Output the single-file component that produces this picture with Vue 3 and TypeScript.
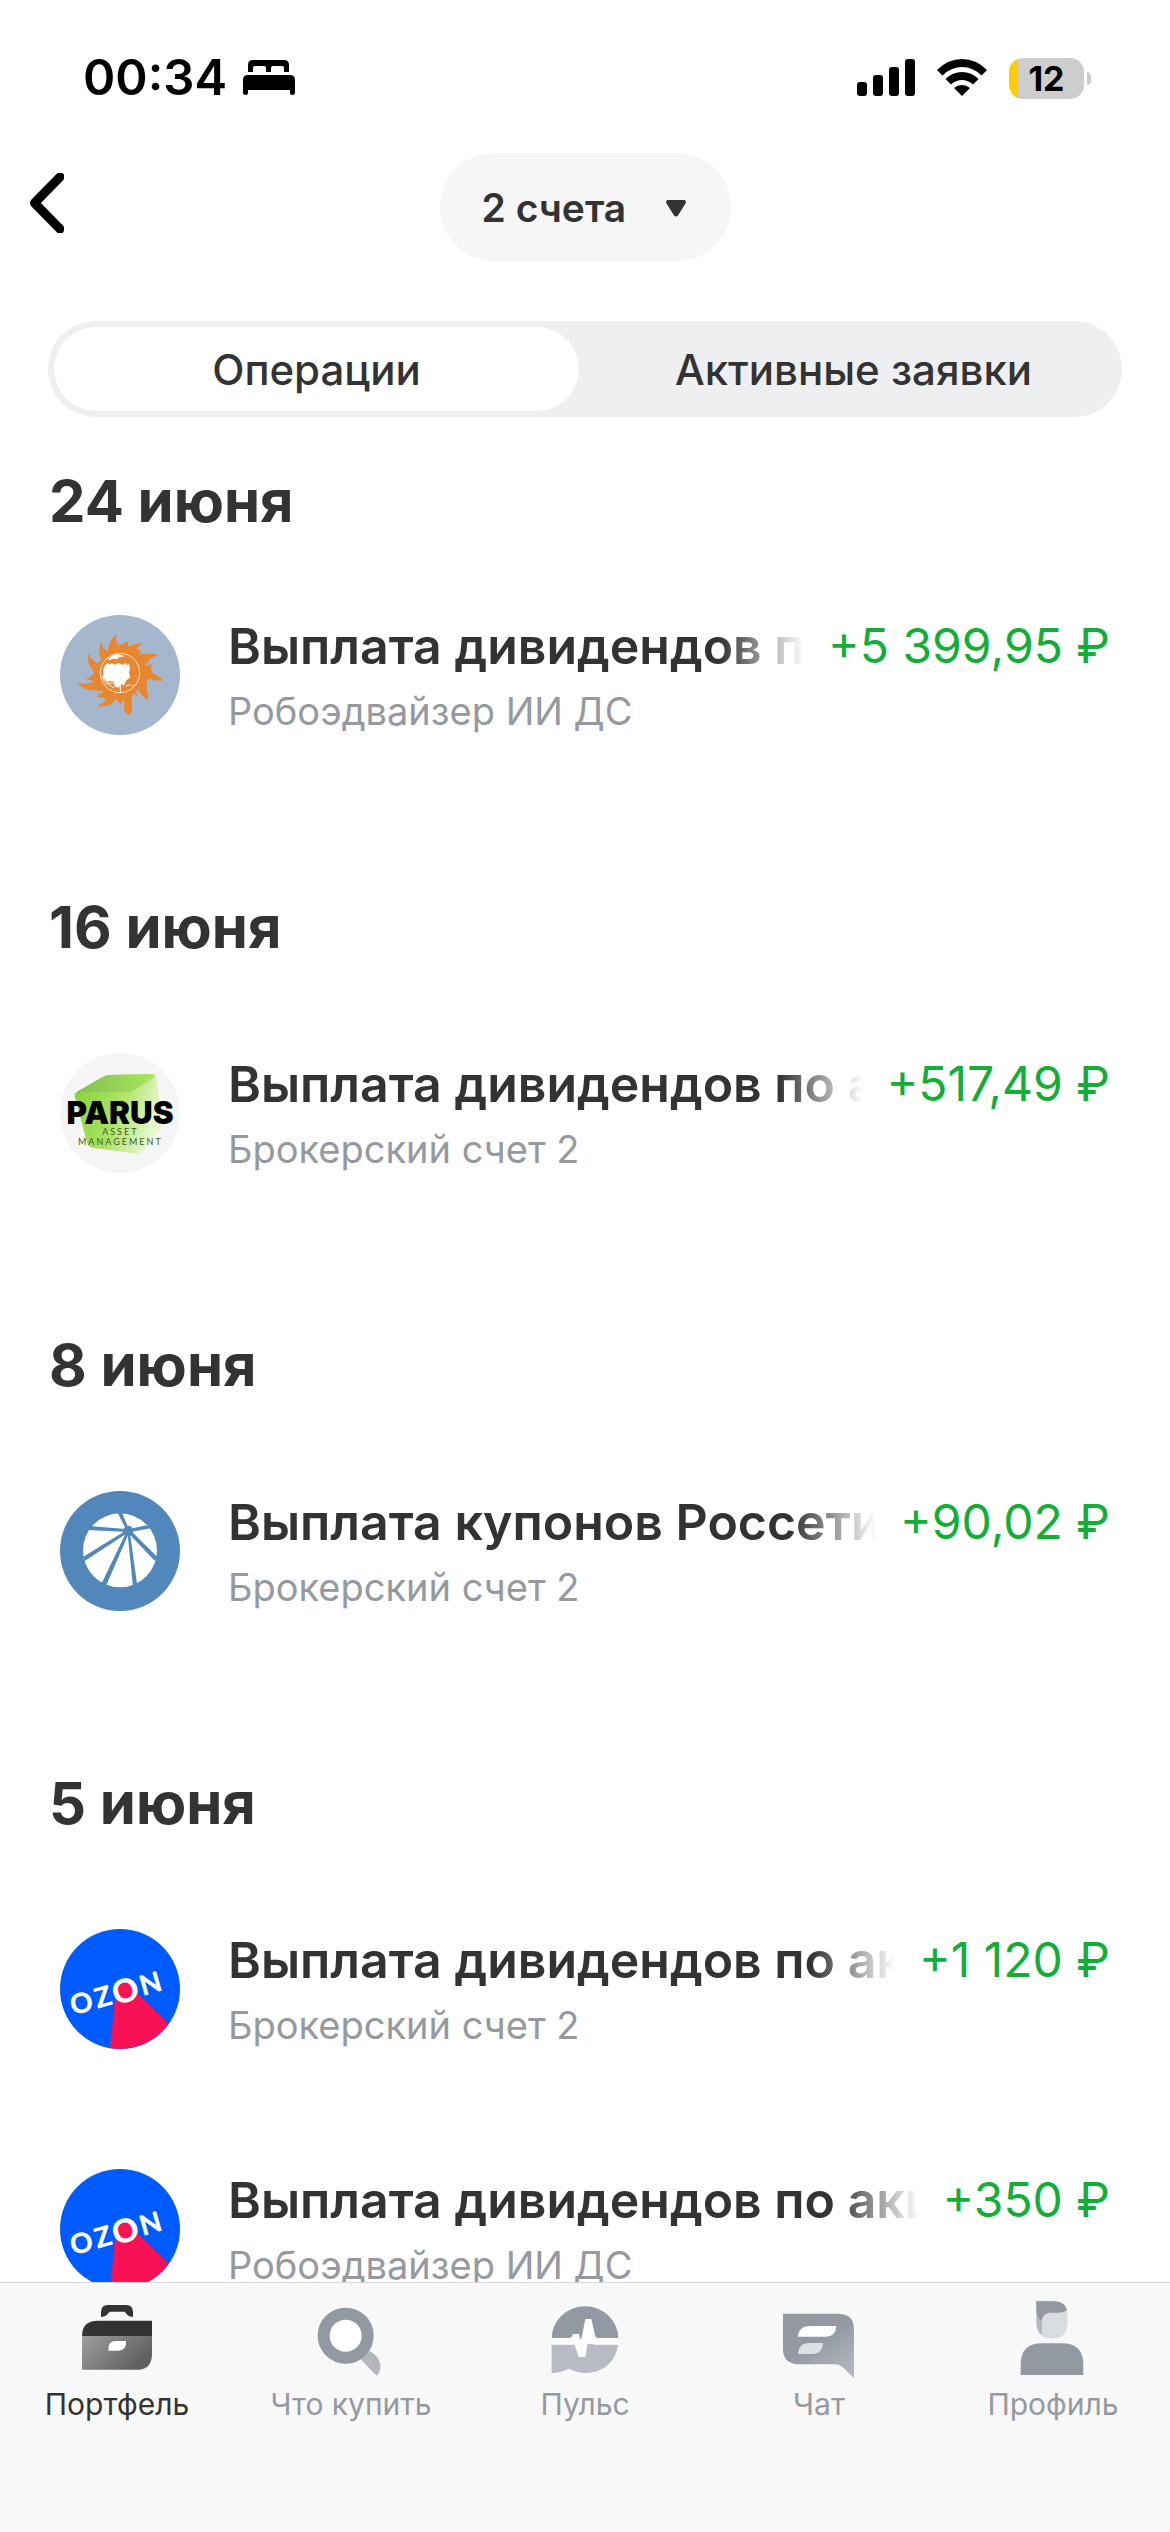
<script setup lang="ts">
import { ref } from 'vue'

type Logo = 'sun' | 'parus' | 'umbrella' | 'ozon'

interface Operation {
  id: number
  logo: Logo
  title: string
  account: string
  amount: string
}

interface Day {
  date: string
  operations: Operation[]
}

const segments = ['Операции', 'Активные заявки']
const activeSegment = ref(0)
const account = ref('2 счета')

const days: Day[] = [
  {
    date: '24 июня',
    operations: [
      { id: 1, logo: 'sun', title: 'Выплата дивидендов по акциям', account: 'Робоэдвайзер ИИ ДС', amount: '+5\u00a0399,95\u00a0₽' },
    ],
  },
  {
    date: '16 июня',
    operations: [
      { id: 2, logo: 'parus', title: 'Выплата дивидендов по акциям', account: 'Брокерский счет 2', amount: '+517,49\u00a0₽' },
    ],
  },
  {
    date: '8 июня',
    operations: [
      { id: 3, logo: 'umbrella', title: 'Выплата купонов Россети', account: 'Брокерский счет 2', amount: '+90,02\u00a0₽' },
    ],
  },
  {
    date: '5 июня',
    operations: [
      { id: 4, logo: 'ozon', title: 'Выплата дивидендов по акциям', account: 'Брокерский счет 2', amount: '+1\u00a0120\u00a0₽' },
      { id: 5, logo: 'ozon', title: 'Выплата дивидендов по акциям', account: 'Робоэдвайзер ИИ ДС', amount: '+350\u00a0₽' },
    ],
  },
]
</script>

<template>
  <div class="screen">
    <div class="status">
      <div class="status-side">
        <span class="clock">00:34</span>
        <svg class="bed" viewBox="0 0 52 36" aria-hidden="true">
          <path d="M5 12V5q0-5 5-5h31q5 0 5 5v7h-5V8q0-2-2-2h-9q-2 0-2 2v4h-5V8q0-2-2-2h-9q-2 0-2 2v4z" />
          <path d="M0 33V20q0-5 5-5h42q5 0 5 5v13q0 2-2.500 2t-2.500-2v-3H5v3q0 2-2.500 2T0 33z" />
        </svg>
      </div>
      <div class="status-side right">
        <svg class="signal" viewBox="0 0 58 38" aria-hidden="true">
          <rect x="0" y="23" width="10" height="14" rx="3" />
          <rect x="16" y="16" width="10" height="21" rx="3" />
          <rect x="32" y="8" width="10" height="29" rx="3" />
          <rect x="48" y="0" width="10" height="37" rx="3" />
        </svg>
        <svg class="wifi" viewBox="0 0 50 38" aria-hidden="true">
          <path d="M0 11Q11 0 25 0t25 11l-5.500 5.500Q36 8 25 8T5.500 16.500z" />
          <path d="M8.500 20Q15.500 13 25 13t16.500 7L36 25.500Q31 21 25 21t-11 4.500z" />
          <path d="M17 29q3.500-3 8-3t8 3l-8 8z" />
        </svg>
        <span class="battery"><span class="level">12</span></span>
      </div>
    </div>

    <header class="header">
      <button class="back" type="button" aria-label="Назад">
        <svg viewBox="0 0 34 60" aria-hidden="true">
          <path d="M30 4 4.500 30 30 56" />
        </svg>
      </button>
      <label class="account">
        <select v-model="account" aria-label="Счета">
          <option>2 счета</option>
        </select>
        <svg viewBox="0 0 20 17" aria-hidden="true">
          <path d="M2 0h16q3 .5 1.500 3.500L12 15.500q-2 2-4 0L.5 3.500Q-1 .5 2 0z" />
        </svg>
      </label>
    </header>

    <div class="segments" role="tablist">
      <button
        v-for="(name, index) in segments"
        :key="name"
        type="button"
        role="tab"
        class="segment"
        :class="{ active: index === activeSegment }"
        :aria-selected="index === activeSegment"
        @click="activeSegment = index"
      >
        {{ name }}
      </button>
    </div>

    <main class="feed">
      <section v-for="day in days" :key="day.date" class="day">
        <h2>{{ day.date }}</h2>
        <article v-for="item in day.operations" :key="item.id" class="operation">
          <svg v-if="item.logo === 'sun'" class="logo" viewBox="60 75 360 360" aria-hidden="true">
            <circle cx="240" cy="255" r="180" fill="#a5b7cd" />
            <path
              fill="#e98630"
              d="M203 187Q205 152 229 132Q226 151 235 166Q248 163 267 152Q261 163 266 169Q284 159 307 160Q291 170 292 182L303 181L298 193Q326 188 357 194Q329 202 325 216Q317 220 316 227L336 222Q328 239 341 252Q358 257 368 272Q344 273 325 266Q319 278 320 300Q325 315 326 330Q309 325 301 308Q293 296 287 300L293 318L280 311Q272 322 276 343Q280 362 268 375Q251 368 252 350Q257 329 247 333L241 346Q238 330 226 326Q218 342 203 347Q187 346 174 353Q173 344 190 338Q206 322 185 324L168 319Q186 311 191 302Q162 302 143 299Q123 294 113 279Q130 284 150 279Q172 274 150 269L136 266Q158 259 163 248Q147 228 144 211Q142 198 148 189Q151 206 164 215Q177 225 184 211Q172 184 183 155Q187 173 203 187z"
            />
            <circle cx="240" cy="249" r="59" fill="none" stroke="#fbe9d2" stroke-width="3" />
            <path
              fill="#fff"
              d="M190 237q3-13 13-19l5 5 8-3 9 5 9-7 13 7 10-7 3 7 7-3 3 14-3 10 3 17-11 8-7 16-7-5-10 11-9-4-5-14-11-3-9 5-11-13zM204 207q12-12 25-14l15 1 11 5-15 2-10 7-13-2-9 5z"
            />
            <path d="M187 257q9 9 18 21l-5 5q-11-11-13-26zM202 281l15-3 12 8-8 7zM258 289l8-5 6 3 8-2M241 282v24" fill="none" stroke="#fff3e5" stroke-width="3" />
          </svg>
          <svg v-else-if="item.logo === 'parus'" class="logo" viewBox="60 68 360 360" role="img" aria-label="Parus">
            <defs>
              <linearGradient id="parus-front" x1="0" y1="0" x2="1" y2="0.300">
                <stop offset="0" stop-color="#86cf3d" />
                <stop offset="0.550" stop-color="#aae360" />
                <stop offset="1" stop-color="#e6f7cf" />
              </linearGradient>
              <linearGradient id="parus-top" x1="0" y1="0" x2="1" y2="0">
                <stop offset="0" stop-color="#82bd52" />
                <stop offset="1" stop-color="#a9e75a" />
              </linearGradient>
            </defs>
            <circle cx="240" cy="248" r="180" fill="#f5f5f5" />
            <path fill="url(#parus-front)" d="M104 198q0-9 9-13l70-42q12-9 28-9l120-3q15 0 17 13l20 120q4 19-8 34l-50 65q-7 9-20 7l-131-18q-16-2-18-17z" />
            <path fill="url(#parus-top)" d="M104 193q2-6 9-10l70-40q12-9 28-9l120-3q12 0 15 7l-72 47-161 1q-12 0-9 7z" />
            <text class="parus-name" x="240" y="281" text-anchor="middle">PARUS</text>
            <text class="parus-note" x="241" y="315" text-anchor="middle">ASSET</text>
            <text class="parus-note" x="241" y="344" text-anchor="middle">MANAGEMENT</text>
          </svg>
          <svg v-else-if="item.logo === 'umbrella'" class="logo" viewBox="60 63 360 360" aria-hidden="true">
            <circle cx="240" cy="243" r="180" fill="#5187bb" />
            <circle cx="240" cy="241" r="111" fill="#fff" />
            <g fill="#5187bb">
              <circle cx="265" cy="182" r="15" />
              <path d="M261 184 233 128l13 0L268 180z" />
              <path d="M265 178 147 168l-2 12L264 186z" />
              <path d="M264 178 130 260l5 12L267 186z" />
              <path d="M261 182 185 340l14 6L269 184z" />
              <path d="M262 182 279 350l13-2L269 182z" />
              <path d="M268 178 353 262l-9 10L262 186z" />
              <path d="M265 178 320 166l13 9L265 187z" />
            </g>
          </svg>
          <svg v-else class="logo" viewBox="60 87 360 360" role="img" aria-label="Ozon">
            <circle cx="240" cy="267" r="180" fill="#005bff" />
            <path fill="#f91155" d="M226 290 210 444.500A180 180 0 0 0 386 371L292 280z" />
            <ellipse cx="256" cy="272" rx="31" ry="24" fill="#f91155" transform="rotate(-16 256 272)" />
            <g class="ozon-name" text-anchor="middle">
              <text transform="rotate(-15 124 309)" x="124" y="339">O</text>
              <text transform="rotate(-16 187 291)" x="189" y="321">Z</text>
              <text class="ozon-wide" transform="rotate(-16 256 272)" x="256" y="307">O</text>
              <text transform="rotate(-16 333 250)" x="331" y="280">N</text>
            </g>
          </svg>

          <div class="details">
            <div class="line">
              <h3>{{ item.title }}</h3>
              <span class="amount">{{ item.amount }}</span>
            </div>
            <p>{{ item.account }}</p>
          </div>
        </article>
      </section>
    </main>

    <nav class="tabs">
      <a href="#portfolio" class="tab current" aria-current="page">
        <svg viewBox="243 120 216 240" aria-hidden="true">
          <defs>
            <linearGradient id="case" x1="0" y1="0" x2="1" y2="0.500">
              <stop offset="0" stop-color="#9f9f9f" />
              <stop offset="1" stop-color="#5f5f5f" />
            </linearGradient>
          </defs>
          <path fill="#333" d="M303 171v-14q0-22 20-22h56q20 0 20 22v14q-14-1-20-10l-5-6h-45l-6 7q-6 8-20 9z" />
          <path fill="#333" d="M246 228q0-46 48-46h162v46z" />
          <path fill="url(#case)" d="M246 228h210v57q-2 44-42 44H246z" />
          <path fill="#fff" d="M325 272q-3-29 24-29h29q3 29-24 29z" />
        </svg>
        <span>Портфель</span>
      </a>
      <a href="#buy" class="tab">
        <svg viewBox="945 120 216 240" aria-hidden="true">
          <path fill="#b3b7bd" d="M1082 298l28-26 18 15q21 24 9 52l-7 8z" />
          <circle cx="1037" cy="227" r="66" fill="#fff" stroke="#9299a2" stroke-width="36" />
        </svg>
        <span>Что купить</span>
      </a>
      <a href="#pulse" class="tab">
        <svg viewBox="447 120 216 240" aria-hidden="true">
          <path fill="#9299a2" d="M455 236a100 97 0 0 1 200 0z" />
          <path fill="#b9bcc5" d="M455 252h200q-6 45-38 68-50 34-112 6-20 12-50 13z" />
          <path fill="#fff" d="M455 234h52q7 0 9-6l3-6h18l5 24 14-69h18l11 48q2 9 9 9h61v20h-72q-14-3-18-18l-9 55h-20l-12-37h-69z" />
        </svg>
        <span>Пульс</span>
      </a>
      <a href="#chat" class="tab">
        <svg viewBox="39 120 216 240" aria-hidden="true">
          <defs>
            <linearGradient id="bubble" x1="0" y1="0" x2="0.700" y2="1">
              <stop offset="0.500" stop-color="#9299a2" />
              <stop offset="1" stop-color="#b0b4bc" />
            </linearGradient>
          </defs>
          <path fill="url(#bubble)" d="M39 161h168q45 2 45 45v148l-29-28q-13-13-30-13H85q-46-2-46-46z" />
          <path fill="#fff" d="M84 230q2-32 36-32h79q-2 32-31 32z" />
          <path fill="#dce0e4" d="M84 282q2-33 34-33h41q-2 33-33 33z" />
        </svg>
        <span>Чат</span>
      </a>
      <a href="#profile" class="tab">
        <svg viewBox="741 120 216 240" aria-hidden="true">
          <path fill="#dadde0" d="M799 124h57q37 5 37 36v30q-2 46-47 46t-47-46z" />
          <path fill="#b5bac1" d="M799 124h60v30l-26 6q-17 5-17 22v42q-17-12-17-36z" />
          <path fill="#9299a2" d="M799 124h57q28 2 35 25-8 9-26 9h-25q-24 1-24 26-17-8-17-40z" />
          <path fill="#9299a2" d="M752 345v-37q4-58 63-58h62q59 0 63 58v37z" />
        </svg>
        <span>Профиль</span>
      </a>
    </nav>
  </div>
</template>

<style>
body {
  margin: 0;
  background: #fff;
}
</style>

<style scoped>
.screen {
  display: flex;
  flex-direction: column;
  height: 100vh;
  overflow: hidden;
  font-family: Inter, "Noto Sans", sans-serif;
  color: #333;
  background: #fff;
}

button,
select {
  margin: 0;
  border: 0;
  font-family: inherit;
  color: inherit;
  cursor: pointer;
}

.status {
  display: flex;
  flex: none;
  align-items: center;
  justify-content: space-between;
  height: 153px;
  padding: 3px 79px 0 83px;
  box-sizing: border-box;
  color: #000;
}

.status-side {
  display: flex;
  align-items: center;
  gap: 16px;
}

.status-side.right {
  gap: 22px;
}

.clock {
  font-size: 49px;
  line-height: 60px;
  font-weight: 600;
}

.bed {
  width: 52px;
  height: 36px;
}

.signal {
  width: 58px;
  height: 38px;
}

.wifi {
  width: 50px;
  height: 38px;
}

.battery {
  display: flex;
  align-items: center;
  gap: 3px;
}

.battery::after {
  content: "";
  width: 4px;
  height: 13px;
  border-radius: 0 6px 6px 0;
  background: #cdcdcd;
}

.level {
  width: 75px;
  height: 41px;
  border-radius: 14px;
  background: linear-gradient(90deg, #ffcc00 9px, #cdcdcd 9px);
  font-size: 34px;
  line-height: 41px;
  font-weight: 700;
  text-align: center;
}

.header {
  display: grid;
  flex: none;
  grid-template-columns: 1fr auto 1fr;
  align-items: center;
  height: 108px;
}

.back {
  display: flex;
  justify-self: start;
  padding: 0 30px 8px;
  background: none;
}

.back svg {
  width: 34px;
  height: 60px;
  fill: none;
  stroke: #000;
  stroke-width: 9px;
  stroke-linecap: round;
  stroke-linejoin: round;
}

.account {
  position: relative;
  display: block;
}

.account select {
  display: block;
  height: 108px;
  padding: 0 104px 0 42px;
  border-radius: 54px;
  appearance: none;
  background: #f6f6f6;
  font-size: 39px;
  font-weight: 600;
}

.account svg {
  position: absolute;
  top: 47px;
  right: 45px;
  width: 20px;
  height: 17px;
  fill: #333;
  pointer-events: none;
}

.segments {
  display: grid;
  flex: none;
  grid-template-columns: 1fr 1fr;
  gap: 12px;
  margin: 60px 48px 0;
  padding: 6px;
  border-radius: 48px;
  background: #edeff1;
}

.segment {
  height: 84px;
  padding: 0;
  border-radius: 42px;
  background: none;
  font-size: 42px;
  font-weight: 500;
}

.segment.active {
  background: #fff;
}

.feed {
  flex: 1;
  min-height: 0;
  overflow: hidden;
}

.day h2 {
  margin: 0;
  padding: 96px 49px 30px;
  font-size: 58px;
  line-height: 72px;
  font-weight: 700;
}

.day:first-child h2 {
  padding: 48px 49px 18px;
}

.operation {
  display: flex;
  align-items: center;
  gap: 48px;
  height: 240px;
  padding: 0 60px;
}

.logo {
  flex: none;
  width: 120px;
  height: 120px;
}

.parus-name {
  font-size: 94px;
  font-weight: 900;
  fill: #000;
}

.parus-note {
  font-family: Lato, sans-serif;
  font-size: 27px;
  letter-spacing: 6px;
  fill: #3d5a2a;
}

.ozon-name {
  font-family: Lato, sans-serif;
  font-size: 84px;
  font-weight: 900;
  fill: #fff;
}

.ozon-wide {
  font-size: 98px;
}

.details {
  flex: 1;
  min-width: 0;
  padding-top: 6px;
}

.line {
  display: flex;
  align-items: center;
  gap: 24px;
}

.line h3 {
  flex: 1;
  min-width: 0;
  margin: 0;
  overflow: hidden;
  white-space: nowrap;
  font-size: 50px;
  line-height: 66px;
  font-weight: 600;
  mask-image: linear-gradient(270deg, transparent, #000 84px);
}

.amount {
  flex: none;
  font-size: 48px;
  line-height: 66px;
  color: #13ae38;
}

.details p {
  margin: 0;
  font-size: 38px;
  line-height: 64px;
  color: #9699a0;
}

.tabs {
  display: grid;
  flex: none;
  grid-template-columns: repeat(5, 1fr);
  height: 250px;
  padding-top: 17px;
  box-sizing: border-box;
  border-top: 1px solid #d8d8d9;
  background: #f8f8f8;
}

.tab {
  display: flex;
  flex-direction: column;
  align-items: center;
  gap: 6px;
  font-size: 30px;
  line-height: 36px;
  color: #9699a0;
  text-decoration: none;
}

.tab.current {
  color: #333;
}

.tab svg {
  width: 72px;
  height: 80px;
}
</style>
